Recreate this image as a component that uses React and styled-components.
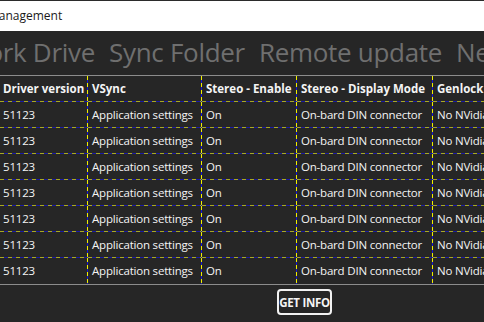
import React from "react";
import styled, { createGlobalStyle } from "styled-components";

const Global = createGlobalStyle`
  html, body { margin: 0; padding: 0; background: #262626; }
  body { width: 484px; height: 322px; overflow: hidden; font-family: "Open Sans", "Noto Sans", sans-serif; }
`;

const Window = styled.div`
  width: 484px;
  height: 322px;
  display: flex;
  flex-direction: column;
  background: #262626;
  overflow: hidden;
`;

const TitleBar = styled.div`
  height: 30px;
  border-top: 1px solid #2b2b2b;
  background: #ffffff;
  display: flex;
  align-items: center;
  overflow: hidden;
  flex-shrink: 0;
`;

const Title = styled.span`
  font-size: 12px;
  color: #1a1a1a;
  margin-left: -12px;
  white-space: nowrap;
  padding-bottom: 2px;
`;

const TabStrip = styled.div`
  height: 44px;
  border-bottom: 1px solid #8c8c8c;
  display: flex;
  align-items: center;
  gap: 14px;
  overflow: hidden;
  flex-shrink: 0;
`;

const Tab = styled.span`
  font-size: 26px;
  color: #6f6f6f;
  white-space: nowrap;
  letter-spacing: -0.3px;
  padding-bottom: 2px;
  flex-shrink: 0;
  &:first-child { margin-left: ${p => p.$offset || 0}px; }
`;

const Grid = styled.div`
  display: grid;
  grid-template-columns: 88px 114px 95px 136px 1fr;
  grid-auto-rows: 26px;
  flex-shrink: 0;
`;

const vline = `repeating-linear-gradient(to bottom, #f0f000 0 4px, #1414d8 4px 7px)`;
const hline = `repeating-linear-gradient(to right, #a9a922 0 4px, #1a1aa8 4px 8px)`;

const Cell = styled.div`
  display: flex;
  align-items: center;
  padding-left: ${p => (p.$first ? 3 : 4)}px;
  padding-bottom: 1px;
  font-size: 11.5px;
  font-weight: ${p => (p.$head ? 700 : 400)};
  color: #f4f4f4;
  white-space: nowrap;
  overflow: hidden;
  letter-spacing: ${p => (p.$head ? "0px" : "-0.2px")};
  background-image: ${p => (p.$last ? "none" : vline)}, ${p => (p.$noBottom ? "none" : hline)};
  background-repeat: no-repeat, no-repeat;
  background-position: right top, left bottom;
  background-size: 1px 100%, 100% 1px;
`;

const Footer = styled.div`
  flex: 1;
  border-top: 1px solid #8c8c8c;
  display: flex;
  align-items: flex-start;
  padding-top: 4px;
  padding-left: 277px;
`;

const Button = styled.button`
  width: 55px;
  height: 26px;
  border: 2px solid #f2f2f2;
  border-radius: 4px;
  background: transparent;
  color: #f4f4f4;
  font-family: "Open Sans", "Noto Sans", sans-serif;
  font-size: 11.5px;
  font-weight: 700;
  letter-spacing: -0.3px;
  padding: 0;
  display: flex;
  align-items: center;
  justify-content: center;
`;

const headers = ["Driver version", "VSync", "Stereo - Enable", "Stereo - Display Mode", "Genlock"];
const row = ["51123", "Application settings", "On", "On-bard DIN connector", "No NVidia Quadro Sync"];
const rows = Array.from({ length: 7 }, () => row);

export default function App() {
  return (
    <Window>
      <Global />
      <TitleBar>
        <Title>Management</Title>
      </TitleBar>
      <TabStrip>
        <Tab $offset={-75}>Network Drive</Tab>
        <Tab>Sync Folder</Tab>
        <Tab>Remote update</Tab>
        <Tab>Network</Tab>
      </TabStrip>
      <Grid>
        {headers.map((h, i) => (
          <Cell key={h} $head $first={i === 0} $last={i === 4}>{h}</Cell>
        ))}
        {rows.map((r, ri) =>
          r.map((c, i) => (
            <Cell key={ri + "-" + i} $first={i === 0} $last={i === 4} $noBottom={ri === rows.length - 1}>
              {c}
            </Cell>
          ))
        )}
      </Grid>
      <Footer>
        <Button>GET INFO</Button>
      </Footer>
    </Window>
  );
}
